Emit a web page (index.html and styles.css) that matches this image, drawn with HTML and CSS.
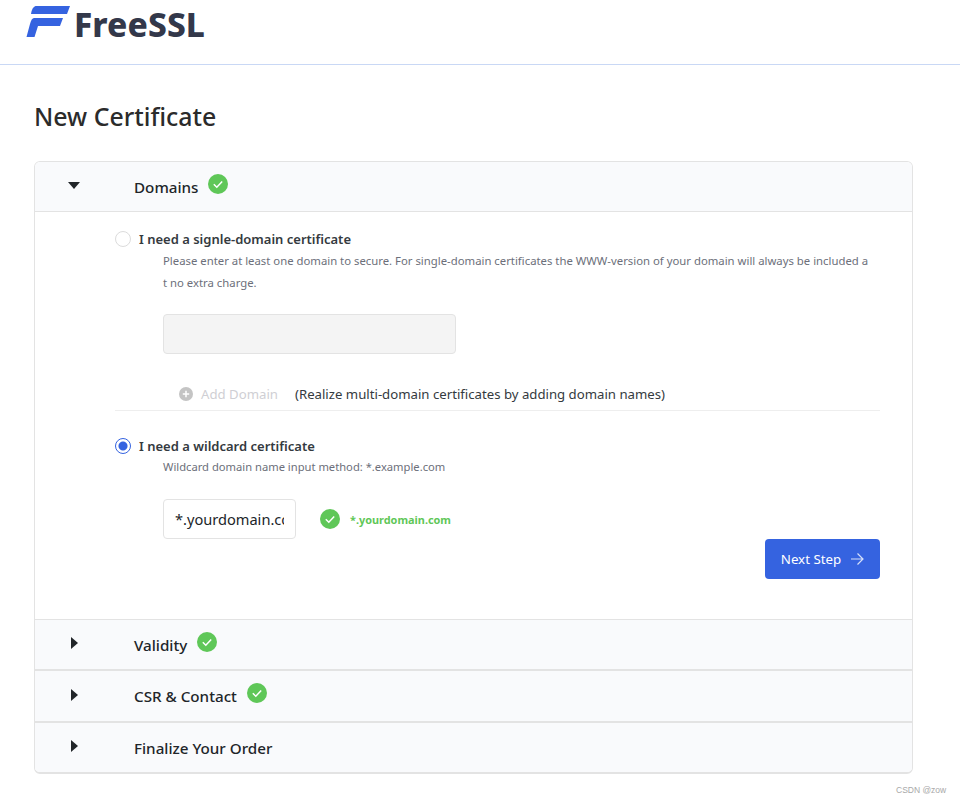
FILE: index.html
```html
<!DOCTYPE html>
<html lang="en">

<head>
    <meta charset="UTF-8">
    <meta name="viewport" content="width=device-width, initial-scale=1.0">
    <title>FreeSSL - New Certificate</title>
    <link rel="stylesheet" href="styles.css">
</head>

<body>
    <!-- Header -->
    <header class="site-header">
        <svg class="logo-mark" width="44" height="32" viewBox="0 0 44 32">
            <path d="M9.500 0H44L41 8H5Q6 1 9.500 0Z" fill="#3563e0"/>
            <path d="M8 12H37L34 20H12L8.500 31H0.500L4 18Q5.500 12 8 12Z" fill="#3563e0"/>
        </svg>
        <span class="logo-text">FreeSSL</span>
    </header>

    <main class="page">
        <h1>New Certificate</h1>

        <div class="accordion">
            <!-- Domains -->
            <div class="step-head step-open">
                <span class="caret-cell"><span class="caret caret-down"></span></span>
                <span class="step-title">Domains</span>
                <svg class="check" viewBox="0 0 20 20"><circle cx="10" cy="10" r="10"/><path d="M5.800 10.300L8.800 13.200L14.200 7.500"/></svg>
            </div>
            <div class="step-body">
                <div class="option">
                    <span class="radio"></span>
                    <span class="option-label">I need a signle-domain certificate</span>
                </div>
                <p class="help help-wrap">Please enter at least one domain to secure. For single-domain certificates the WWW-version of your domain will always be included at no extra charge.</p>
                <input class="text-input input-disabled" type="text" disabled>
                <div class="add-row">
                    <svg class="add-icon" viewBox="0 0 14 14"><circle cx="7" cy="7" r="7"/><path d="M7 3.800V10.200M3.800 7H10.200"/></svg>
                    <span class="add-link">Add Domain</span>
                    <span class="add-note">(Realize multi-domain certificates by adding domain names)</span>
                </div>

                <div class="option option-second">
                    <span class="radio radio-on"></span>
                    <span class="option-label">I need a wildcard certificate</span>
                </div>
                <p class="help help-second">Wildcard domain name input method: *.example.com</p>
                <div class="wild-row">
                    <input class="text-input input-wild" type="text" value="*.yourdomain.com">
                    <svg class="check" viewBox="0 0 20 20"><circle cx="10" cy="10" r="10"/><path d="M5.800 10.300L8.800 13.200L14.200 7.500"/></svg>
                    <span class="wild-name">*.yourdomain.com</span>
                </div>
                <div class="actions">
                    <button class="next-btn">Next Step
                        <svg width="14" height="14" viewBox="0 0 14 14"><path d="M1 7H12.500M7.500 1.500L13 7L7.500 12.500"/></svg>
                    </button>
                </div>
            </div>

            <!-- Collapsed steps -->
            <div class="step-head">
                <span class="caret-cell"><span class="caret"></span></span>
                <span class="step-title">Validity</span>
                <svg class="check" viewBox="0 0 20 20"><circle cx="10" cy="10" r="10"/><path d="M5.800 10.300L8.800 13.200L14.200 7.500"/></svg>
            </div>
            <div class="step-head step-tall">
                <span class="caret-cell"><span class="caret"></span></span>
                <span class="step-title">CSR &amp; Contact</span>
                <svg class="check" viewBox="0 0 20 20"><circle cx="10" cy="10" r="10"/><path d="M5.800 10.300L8.800 13.200L14.200 7.500"/></svg>
            </div>
            <div class="step-head step-last">
                <span class="caret-cell"><span class="caret"></span></span>
                <span class="step-title">Finalize Your Order</span>
            </div>
        </div>
    </main>

    <div class="watermark">CSDN @zow</div>
</body>

</html>
```

FILE: styles.css
```css
body {
    font-family: "Noto Sans", sans-serif;
    margin: 0;
    padding: 0;
    background-color: white;
    color: #212529;
}

.site-header {
    display: flex;
    align-items: flex-start;
    box-sizing: border-box;
    height: 65px;
    padding: 6px 0 0 26px;
    border-bottom: 1px solid #c9d8f5;
}

.logo-mark {
    flex: none;
}

.logo-text {
    margin: -2px 0 0 4px;
    font-size: 33.500px;
    line-height: 40px;
    font-weight: 800;
    letter-spacing: 0.100px;
    color: #33384a;
}

.page {
    padding: 0 47px 0 34px;
}

h1 {
    margin: 0;
    padding-top: 32px;
    font-size: 24.900px;
    line-height: 38px;
    font-weight: 500;
    color: #2b2b2b;
}

.accordion {
    margin-top: 26px;
    border: 1px solid #e3e3e3;
    border-bottom-width: 2px;
    border-radius: 6px;
    overflow: hidden;
}

.step-head {
    display: flex;
    align-items: center;
    height: 49px;
    background-color: #f9fafc;
    border-top: 1px solid #e3e3e3;
    border-bottom: 1px solid #e3e3e3;
}

.step-open {
    border-top: none;
}

.step-tall {
    height: 50px;
}

.step-last {
    border-bottom: none;
}

.caret-cell {
    display: flex;
    flex: none;
    justify-content: center;
    width: 78px;
    margin-right: 21px;
}

.caret {
    width: 0;
    height: 0;
    margin-top: -3px;
    border-top: 6px solid transparent;
    border-bottom: 6px solid transparent;
    border-left: 7px solid #212529;
}

.caret-down {
    margin-top: -2px;
    border-left: 6px solid transparent;
    border-right: 6px solid transparent;
    border-top: 7px solid #212529;
    border-bottom: none;
}

.step-title {
    font-size: 15.200px;
    line-height: 22px;
    font-weight: 500;
}

.step-head .check {
    margin: -6px 0 0 10px;
}

.check {
    flex: none;
    width: 20px;
    height: 20px;
}

.check circle {
    fill: #5fc758;
}

.check path {
    fill: none;
    stroke: white;
    stroke-width: 1.500;
}

.step-body {
    padding: 19px 32px 40px 80px;
}

.option {
    display: flex;
    align-items: center;
    height: 16px;
}

.option-second {
    margin-top: 27px;
}

.radio {
    flex: none;
    box-sizing: border-box;
    width: 16px;
    height: 16px;
    margin-right: 8px;
    border: 1px solid #dcdcdc;
    border-radius: 50%;
    background: white;
}

.radio-on {
    border: 1px solid #3563e0;
    background: radial-gradient(circle, #3563e0 0 4px, white 5px);
}

.option-label {
    font-size: 13px;
    font-weight: 600;
    color: #343a40;
}

.help {
    margin: 3px 0 0 48px;
    font-size: 11.200px;
    line-height: 22px;
    color: #6c6f7a;
}

.help-second {
    margin-top: 2px;
}

.help-wrap {
    width: 707px;
    font-size: 11.330px;
    word-break: break-all;
}

.text-input {
    display: block;
    box-sizing: border-box;
    height: 40px;
    border: 1px solid #e3e3e3;
    border-radius: 4px;
    font-family: "Noto Sans", sans-serif;
    font-size: 14.600px;
    color: #212529;
    outline: none;
}

.input-disabled {
    width: 293px;
    margin: 20px 0 0 48px;
    background-color: #f4f4f4;
}

.input-wild {
    width: 133px;
    padding: 0 11px;
    background: white;
}

.add-row {
    display: flex;
    align-items: center;
    box-sizing: border-box;
    height: 57px;
    padding: 29px 0 6px 64px;
    border-bottom: 1px solid #eeeeee;
    font-size: 13.200px;
}

.add-icon {
    flex: none;
    width: 14px;
    height: 14px;
}

.add-icon circle {
    fill: #c4c4c4;
}

.add-icon path {
    fill: none;
    stroke: white;
    stroke-width: 1.500;
}

.add-link {
    margin-left: 8px;
    color: #cfcfd4;
}

.add-note {
    margin-left: 17px;
    color: #343a40;
}

.wild-row {
    display: flex;
    align-items: center;
    margin: 21px 0 0 48px;
}

.wild-row .check {
    margin-left: 24px;
}

.wild-name {
    margin-left: 10px;
    font-size: 10.900px;
    font-weight: 700;
    color: #5fc758;
}

.actions {
    display: flex;
    justify-content: flex-end;
}

.next-btn {
    display: flex;
    align-items: center;
    justify-content: center;
    gap: 9px;
    width: 115px;
    height: 40px;
    background-color: #3563e0;
    color: white;
    border: none;
    border-radius: 4px;
    font-family: "Noto Sans", sans-serif;
    font-size: 13.300px;
}

.next-btn path {
    fill: none;
    stroke: #d5e0fa;
    stroke-width: 1.200;
}

.watermark {
    position: absolute;
    top: 785px;
    left: 896px;
    font-family: "Liberation Sans", sans-serif;
    font-size: 8.500px;
    color: #a8a8a8;
}
```
